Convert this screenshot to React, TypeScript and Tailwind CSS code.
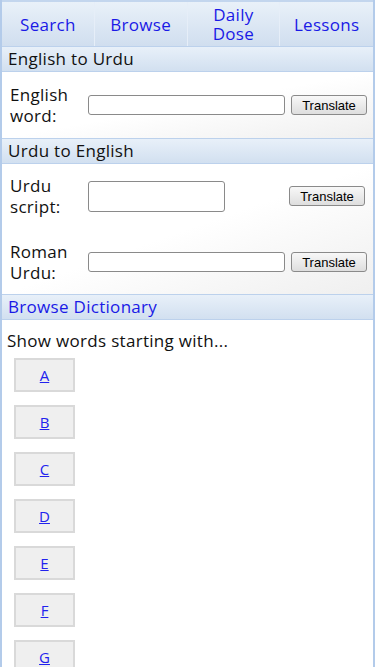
const letters = ["A", "B", "C", "D", "E", "F", "G", "H", "I", "J"];

function SectionHeader({ title, link }: { title: string; link?: boolean }) {
  return (
    <div
      className={`h-[26px] flex items-center px-[6px] text-[17px] tracking-[0.3px] border-y border-[#bcd1ec] bg-gradient-to-b from-[#e8f0f9] to-[#d2e0f0] ${
        link ? "text-[#1a1ae6]" : "text-[#111]"
      }`}
    >
      {title}
    </div>
  );
}

function TranslateButton() {
  return (
    <button className="h-[20px] w-[76px] shrink-0 rounded-[3px] border border-[#8a8a8a] bg-gradient-to-b from-[#f8f8f8] to-[#dedede] text-[13px] leading-none tracking-normal text-black font-['Liberation_Sans',Arial,sans-serif]">
      Translate
    </button>
  );
}

export default function App() {
  return (
    <div className="min-h-screen bg-white border-x-2 border-[#b3cbea] font-['Open_Sans',sans-serif] overflow-hidden">
      {/* top nav */}
      <nav className="grid grid-cols-4 h-[46px] border-t-2 border-[#c3d6ee] bg-gradient-to-b from-[#e9f1f9] to-[#d0deef] text-[17px] tracking-[0.3px] leading-[19px] text-[#1a1ae6]">
        {["Search", "Browse", "Daily Dose", "Lessons"].map((t, i) => (
          <a
            key={t}
            className={`flex items-center justify-center text-center px-6 ${
              i < 3 ? "border-r border-[#e6eef8]" : ""
            }`}
          >
            {t}
          </a>
        ))}
      </nav>

      <SectionHeader title="English to Urdu" />
      <div className="flex items-center gap-[6px] pl-[8px] pr-[8px] py-[10px] h-[66px] bg-gradient-to-br from-white via-white to-[#efefef] text-[17px] tracking-[0.3px] leading-[21px] text-[#111]">
        <label className="w-[72px] shrink-0">
          English
          <br />
          word:
        </label>
        <input className="h-[20px] w-[197px] shrink-0 rounded-[3px] border border-[#8a8a8a] bg-white" />
        <TranslateButton />
      </div>

      <SectionHeader title="Urdu to English" />
      <div className="bg-gradient-to-br from-white via-white to-[#efefef] text-[17px] tracking-[0.3px] leading-[21px] text-[#111] pl-[8px] pr-[8px] pt-[5px] pb-[9px]">
        <div className="flex items-center gap-[6px] h-[54px]">
          <label className="w-[72px] shrink-0">
            Urdu
            <br />
            script:
          </label>
          <textarea className="h-[31px] w-[137px] shrink-0 resize-none rounded-[3px] border border-[#8a8a8a] bg-white" />
          <div className="flex-1 flex justify-end">
            <TranslateButton />
          </div>
        </div>
        <div className="flex items-center gap-[6px] h-[46px] mt-[16px]">
          <label className="w-[72px] shrink-0">
            Roman
            <br />
            Urdu:
          </label>
          <input className="h-[20px] w-[197px] shrink-0 rounded-[3px] border border-[#8a8a8a] bg-white" />
          <TranslateButton />
        </div>
      </div>

      <SectionHeader title="Browse Dictionary" link />
      <div className="px-[5px] pt-[9px]">
        <p className="text-[17px] tracking-[0.3px] leading-[24px] text-[#111]">Show words starting with...</p>
        <div className="flex flex-col gap-[13px] pl-[7px] pt-[5px]">
          {letters.map((l) => (
            <a
              key={l}
              className="w-[61px] h-[34px] flex items-center justify-center border-2 border-[#d9d9d9] bg-[#efefef] text-[15px] text-[#2222ee] underline"
            >
              {l}
            </a>
          ))}
        </div>
      </div>
    </div>
  );
}
